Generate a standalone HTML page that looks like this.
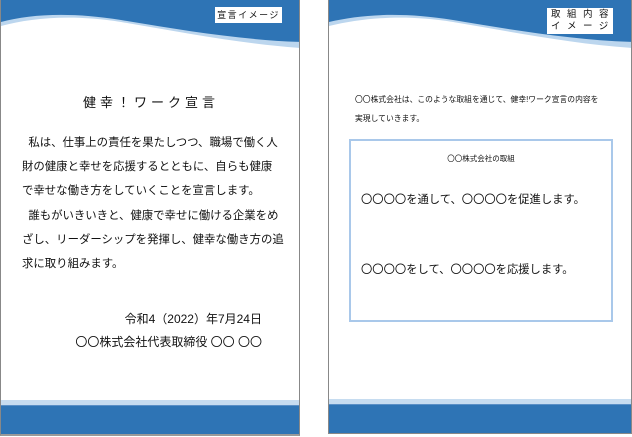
<!DOCTYPE html>
<html><head><meta charset="utf-8"><style>
body{margin:0;width:632px;height:437px;background:#fff;position:relative;overflow:hidden;font-family:"Liberation Sans","Noto Sans CJK JP",sans-serif;color:#111}
.pg{position:absolute;top:0;height:434px;border:1px solid #888;border-top:none;box-sizing:border-box;overflow:hidden;background:#fff}
.bot1{position:absolute;left:0;right:0;bottom:0;height:34px;background:#c6dcf0}
.bot2{position:absolute;left:0;right:0;bottom:0;height:28px;background:#2e74b5;border-top:1px solid #5a8fc6}
.p{position:absolute;white-space:nowrap}
</style></head><body>
<div class="pg" style="left:0;width:300px;height:436px;border-bottom:2px solid #999">
<svg width="300" height="60" style="position:absolute;left:0;top:0"><path d="M0 0H300V48C240 44 180 32 120 22C70 14 30 18 0 26Z" fill="#bcd6ee"/><path d="M0 0H300V42C240 40 180 30 120 20C70 12 30 14 0 22Z" fill="#2e74b5"/></svg>
<div class="p" style="left:214px;top:7px;width:67px;height:16px;background:#fff;font-size:9px;line-height:16px;text-align:center;letter-spacing:1.5px">宣言イメージ</div>
<div class="p" style="left:0;width:300px;top:92px;text-align:center;font-size:13px;letter-spacing:4px">健幸！ワーク宣言</div>
<div class="p" style="left:21px;top:131px;font-size:11.4px;line-height:24.2px">&nbsp;&nbsp;私は、仕事上の責任を果たしつつ、職場で働く人<br>財の健康と幸せを応援するとともに、自らも健康<br>で幸せな働き方をしていくことを宣言します。<br>&nbsp;&nbsp;誰もがいきいきと、健康で幸せに働ける企業をめ<br>ざし、リーダーシップを発揮し、健幸な働き方の追<br>求に取り組みます。</div>
<div class="p" style="right:37px;top:310px;font-size:12px">令和4（2022）年7月24日</div>
<div class="p" style="right:37px;top:333px;font-size:12px">〇〇株式会社代表取締役 〇〇 〇〇</div>
<div class="bot1"></div><div class="bot2"></div>
</div>
<div class="pg" style="left:328px;width:304px">
<svg width="304" height="60" style="position:absolute;left:0;top:0"><path d="M0 0H304V48C244 44 184 32 124 22C74 14 34 18 0 26Z" fill="#bcd6ee"/><path d="M0 0H304V42C244 40 184 30 124 20C74 12 34 14 0 22Z" fill="#2e74b5"/></svg>
<div class="p" style="left:218px;top:8px;width:66px;height:26px;background:#fff;font-size:9.5px;line-height:12px;padding-top:1px;padding-left:4px;box-sizing:border-box;text-align:left;letter-spacing:6.5px">取組内容<br>イメージ</div>
<div class="p" style="left:26px;top:90px;font-size:7.8px;line-height:19px">〇〇株式会社は、このような取組を通じて、健幸!ワーク宣言の内容を<br>実現していきます。</div>
<div class="p" style="left:20px;top:139px;width:264px;height:183px;border:2px solid #a9c8ea;box-sizing:border-box">
<div class="p" style="left:0;width:260px;top:12px;text-align:center;font-size:7.5px">〇〇株式会社の取組</div>
<div class="p" style="left:10px;top:50px;font-size:11.3px">〇〇〇〇を通して、〇〇〇〇を促進します。</div>
<div class="p" style="left:10px;top:120px;font-size:11.3px">〇〇〇〇をして、〇〇〇〇を応援します。</div>
</div>
<div class="bot1"></div><div class="bot2"></div>
</div>
</body></html>
